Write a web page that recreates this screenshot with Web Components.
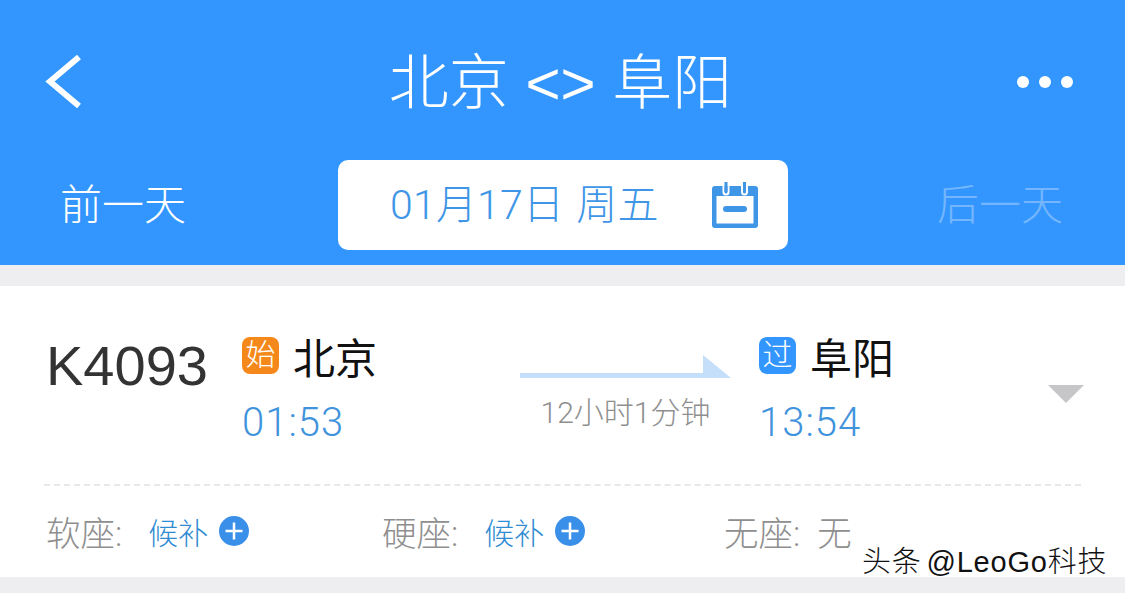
<!DOCTYPE html>
<html lang="zh">
<head>
<meta charset="utf-8">
<title>北京 &lt;&gt; 阜阳</title>
<style>
  html, body { margin: 0; height: 593px; overflow: hidden; background: #eeedf0; }
  body { font-family: "Liberation Sans", "Noto Sans CJK SC", sans-serif; position: relative; }
</style>
</head>
<body>
<trip-header from="北京" to="阜阳" date="01月17日 周五"></trip-header>
<train-card number="K4093" duration="12小时1分钟">
  <train-stop slot="from" width="278" badge="始" tone="start" name="北京" time="01:53"></train-stop>
  <train-stop slot="to" width="289" badge="过" tone="pass" name="阜阳" time="13:54"></train-stop>
  <seat-item slot="seats" width="336" label="软座:" value="候补" waitlist></seat-item>
  <seat-item slot="seats" width="342" label="硬座:" value="候补" waitlist></seat-item>
  <seat-item slot="seats" label="无座:" value="无"></seat-item>
</train-card>
<water-mark>头条 @LeoGo科技</water-mark>

<script>
const LIGHT = `Roboto, "Noto Sans CJK SC", sans-serif`;

// Blue top area: title row and date row
class TripHeader extends HTMLElement {
  connectedCallback() {
    const root = this.attachShadow({ mode: 'open' });
    root.innerHTML = `
      <style>
        :host { display: block; height: 265px; background: #3396ff; color: #fff; }
        .nav { display: flex; align-items: center; justify-content: space-between; height: 160px; padding: 3px 52px 0 45px; box-sizing: border-box; }
        .back { flex: none; width: 36px; height: 54px; margin-top: -2px; }
        .title { font-size: 60px; font-weight: 300; line-height: 157px; margin: 4px 0 0 23px; white-space: nowrap; }
        .more { display: flex; gap: 10px; }
        .more i { width: 12px; height: 12px; border-radius: 50%; background: #fff; }
        .days { display: flex; align-items: flex-start; padding-left: 60px; }
        .day { font-family: ${LIGHT}; font-size: 42px; font-weight: 300; line-height: 92px; width: 126px; white-space: nowrap; }
        .day.off { color: #74b6fd; margin-left: 149px; }
        .chip { flex: none; margin-left: 152px; width: 450px; height: 90px; background: #fff; border-radius: 10px; display: flex; align-items: center; box-sizing: border-box; padding: 0 30px 0 52px; justify-content: space-between; color: #4096e6; font-family: ${LIGHT}; font-size: 41px; font-weight: 300; letter-spacing: 0.200px; word-spacing: 2px; white-space: nowrap; }
        .chip span { display: block; line-height: 90px; }
        svg { display: block; }
      </style>
      <div class="nav">
        <svg class="back" viewBox="0 0 36 54"><path d="M34 3 L5 27.500 L34 52" fill="none" stroke="#fff" stroke-width="6"/></svg>
        <div class="title">${this.getAttribute('from')} &lt;&gt; ${this.getAttribute('to')}</div>
        <div class="more"><i></i><i></i><i></i></div>
      </div>
      <div class="days">
        <div class="day">前一天</div>
        <div class="chip">
          <span>${this.getAttribute('date')}</span>
          <svg width="46" height="46" viewBox="0 0 46 46">
            <path d="M3 4h40a3 3 0 0 1 3 3v36a3 3 0 0 1-3 3H3a3 3 0 0 1-3-3V7a3 3 0 0 1 3-3z" fill="#4096e6"/>
            <rect x="4.500" y="14" width="37" height="27.500" fill="#fff"/>
            <rect x="11" y="24" width="24" height="6" rx="3" fill="#4096e6"/>
            <path d="M11.500 1v9a2.500 2.500 0 0 0 5 0V1M30 1v9a2.500 2.500 0 0 0 5 0V1" fill="none" stroke="#fff" stroke-width="2"/>
            <path d="M14 0v10M32.500 0v10" stroke="#4096e6" stroke-width="3"/>
          </svg>
        </div>
        <div class="day off">后一天</div>
      </div>`;
  }
}

// Card with the train row, dashed rule and seat row
class TrainCard extends HTMLElement {
  connectedCallback() {
    const root = this.attachShadow({ mode: 'open' });
    root.innerHTML = `
      <style>
        :host { display: block; margin-top: 21px; height: 291px; background: #fff; padding: 0 44px; box-sizing: border-box; }
        .row { display: flex; align-items: flex-start; height: 200px; border-bottom: 2px dashed #e8e8e8; padding-top: 50px; box-sizing: border-box; }
        .num { flex: none; width: 198px; padding-left: 2px; box-sizing: border-box; font-size: 56px; line-height: 60px; color: #333; }
        .trip { flex: none; width: 212px; margin-right: 27px; }
        .dur { font-family: ${LIGHT}; font-size: 30px; font-weight: 300; line-height: 34px; color: #8f8f8f; text-align: center; margin: 17px 0 0 -1px; white-space: nowrap; }
        .caret { flex: none; width: 0; height: 0; margin: 49px 0 0 0; border-left: 18px solid transparent; border-right: 18px solid transparent; border-top: 18px solid #c6c6c8; }
        svg { display: block; margin-top: 19px; }
        .seats { display: flex; align-items: center; height: 89px; padding-top: 1px; box-sizing: border-box; }
      </style>
      <div class="row">
        <div class="num">${this.getAttribute('number')}</div>
        <slot name="from"></slot>
        <div class="trip">
          <svg width="212" height="24" viewBox="0 0 212 24"><path d="M0 18H183V0L211 23H0Z" fill="#c5defa"/></svg>
          <div class="dur">${this.getAttribute('duration')}</div>
        </div>
        <slot name="to"></slot>
        <div class="caret"></div>
      </div>
      <div class="seats"><slot name="seats"></slot></div>`;
  }
}

// One end of the trip: badge + station name, time below
class TrainStop extends HTMLElement {
  connectedCallback() {
    const root = this.attachShadow({ mode: 'open' });
    const bg = this.getAttribute('tone') === 'start' ? '#f5881a' : '#3396ff';
    root.innerHTML = `
      <style>
        :host { display: block; flex: none; width: ${this.getAttribute('width')}px; }
        .top { display: flex; gap: 14px; height: 44px; }
        .badge { width: 37px; height: 37px; border-radius: 8px; background: ${bg}; color: #fff; font-size: 30px; font-weight: 300; line-height: 36px; text-align: center; margin-top: 1px; }
        .name { font-size: 42px; line-height: 44px; color: #111; margin-top: 2px; }
        .time { font-family: ${LIGHT}; font-size: 40px; font-weight: 300; letter-spacing: 1px; line-height: 46px; color: #3f93dc; margin-top: 20px; }
      </style>
      <div class="top"><span class="badge">${this.getAttribute('badge')}</span><span class="name">${this.getAttribute('name')}</span></div>
      <div class="time">${this.getAttribute('time')}</div>`;
  }
}

// Seat class label with availability, optional waitlist plus
class SeatItem extends HTMLElement {
  connectedCallback() {
    const root = this.attachShadow({ mode: 'open' });
    const waitlist = this.hasAttribute('waitlist');
    const w = this.getAttribute('width');
    root.innerHTML = `
      <style>
        :host { display: inline-flex; flex: none; ${w ? `width: ${w}px;` : ''} }
        .wrap { display: flex; align-items: center; height: 40px; white-space: nowrap; }
        .label { font-family: ${LIGHT}; font-size: 34.500px; font-weight: 300; color: #8f8f8f; padding-left: 2px; }
        .val { font-size: 30px; font-weight: 300; color: #2f8bd2; margin-left: 26px; }
        .none { font-size: 34.500px; font-weight: 300; color: #8f8f8f; margin-left: 17px; }
        svg { display: block; flex: none; margin-left: 11px; }
      </style>
      <div class="wrap">
        <span class="label">${this.getAttribute('label')}</span>
        <span class="${waitlist ? 'val' : 'none'}">${this.getAttribute('value')}</span>
        ${waitlist ? `<svg width="30" height="30" viewBox="0 0 30 30"><circle cx="15" cy="15" r="15" fill="#3a8fe8"/><path d="M15 6.500v17M6.500 15h17" stroke="#fff" stroke-width="2.500"/></svg>` : ''}
      </div>`;
  }
}

// Site watermark sitting over the bottom right corner
class WaterMark extends HTMLElement {
  constructor() {
    super();
    this.attachShadow({ mode: 'open' }).innerHTML = `
      <style>
        :host { position: absolute; left: 862px; top: 546px; font-size: 29px; font-weight: 300; letter-spacing: 0.800px; word-spacing: -4px; line-height: 32px; color: #111; white-space: nowrap; text-shadow: 1px 1px 0 #fff, -1px 0 0 #fff; }
      </style>
      <slot></slot>`;
  }
}

customElements.define('trip-header', TripHeader);
customElements.define('train-card', TrainCard);
customElements.define('train-stop', TrainStop);
customElements.define('seat-item', SeatItem);
customElements.define('water-mark', WaterMark);
</script>
</body>
</html>
